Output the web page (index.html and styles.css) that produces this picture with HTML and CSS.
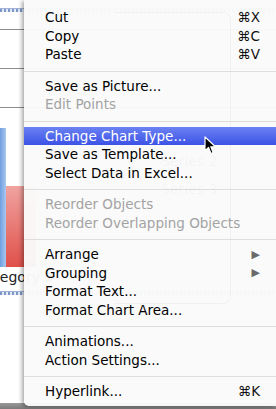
FILE: index.html
```html
<!DOCTYPE html>
<html lang="en">
<head>
  <meta charset="UTF-8">
  <title>Chart Context Menu</title>
  <link rel="stylesheet" href="styles.css">
</head>
<body>
  <div class="stage">
    <div class="chart">
      <div class="sel-line top"></div>
      <div class="grid g1"></div>
      <div class="grid g2"></div>
      <div class="grid g3"></div>
      <div class="bar blue"></div>
      <div class="bar red"></div>
      <div class="cat">Category 1</div>
      <div class="sel-line bottom"></div>
      <div class="window-bottom"></div>
    </div>

    <div class="menu">
      <div class="ghost">
        <div class="legend"></div>
        <span class="ghost-text s2">Series 2</span>
        <span class="ghost-text s3">Series 3</span>
      </div>
      <div class="item">Cut<span class="key">⌘X</span></div>
      <div class="item">Copy<span class="key">⌘C</span></div>
      <div class="item">Paste<span class="key">⌘V</span></div>
      <div class="sep"></div>
      <div class="item">Save as Picture...</div>
      <div class="item off">Edit Points</div>
      <div class="sep"></div>
      <div class="item active">Change Chart Type...</div>
      <div class="item">Save as Template...</div>
      <div class="item">Select Data in Excel...</div>
      <div class="sep"></div>
      <div class="item off">Reorder Objects</div>
      <div class="item off">Reorder Overlapping Objects</div>
      <div class="sep"></div>
      <div class="item">Arrange<span class="arrow">▶</span></div>
      <div class="item">Grouping<span class="arrow">▶</span></div>
      <div class="item">Format Text...</div>
      <div class="item">Format Chart Area...</div>
      <div class="sep"></div>
      <div class="item">Animations...</div>
      <div class="item">Action Settings...</div>
      <div class="sep"></div>
      <div class="item">Hyperlink...<span class="key">⌘K</span></div>
    </div>

    <svg class="cursor" width="14" height="20" viewBox="0 0 14 20">
      <path d="M1 1 L1 15 L4.5 11.5 L7 17.5 L9.2 16.6 L6.8 10.8 L11.5 10.8 Z" fill="#000" stroke="#fff" stroke-width="1.2" stroke-linejoin="round"/>
    </svg>
  </div>
</body>
</html>
```

FILE: styles.css
```css
body {
  margin: 0;
  padding: 0;
  background-color: #fff;
  font-family: "DejaVu Sans", "Liberation Sans", sans-serif;
}

.stage {
  position: relative;
  width: 276px;
  height: 409px;
  overflow: hidden;
}

/* chart behind the menu */
.chart {
  position: absolute;
  inset: 0;
  background-color: #fff;
}

.sel-line {
  position: absolute;
  left: 0;
  width: 100%;
  height: 3px;
  background: repeating-linear-gradient(90deg, #7c96c8 0 2px, #e6ecf6 2px 4px);
  border-top: 1px solid #9fb2d8;
}

.sel-line.top {
  top: 8px;
}

.sel-line.bottom {
  top: 291px;
}

.grid {
  position: absolute;
  left: 0;
  width: 100%;
  height: 1px;
  background-color: #8c8c8c;
}

.g1 { top: 29px; }
.g2 { top: 68px; }
.g3 { top: 107px; }

.bar {
  position: absolute;
  bottom: 142px;
}

.bar.blue {
  left: 0;
  width: 6px;
  top: 128px;
  background: linear-gradient(90deg, #6f9fe0, #a9c7ef);
}

.bar.red {
  left: 6px;
  width: 30px;
  top: 186px;
  background: linear-gradient(180deg, #f0a3a0, #e0504a);
}

.cat {
  position: absolute;
  left: -24px;
  top: 269px;
  font-size: 14px;
  color: #222;
}

.window-bottom {
  position: absolute;
  left: 0;
  right: 0;
  bottom: 0;
  height: 6px;
  background: linear-gradient(180deg, #9a9a9a, #7a7a7a);
}

/* context menu */
.menu {
  position: absolute;
  left: 24px;
  top: 0;
  right: 0;
  padding: 8px 0 5.5px;
  background-color: rgba(250, 250, 250, 0.97);
  border-radius: 0 0 0 5px;
  box-shadow: -2px 1px 4px rgba(0, 0, 0, 0.35);
  font-size: 13.5px;
  color: #000;
}

.ghost {
  position: absolute;
  inset: 0;
  pointer-events: none;
}

.legend {
  position: absolute;
  left: 90px;
  top: 12px;
  width: 116px;
  height: 290px;
  border: 1px solid rgba(0, 0, 0, 0.035);
  border-left: none;
  border-radius: 0 8px 8px 0;
}

.ghost-text {
  position: absolute;
  left: 137px;
  font-size: 14px;
  color: rgba(0, 0, 0, 0.04);
}

.s2 { top: 153px; }
.s3 { top: 181px; }

.item {
  position: relative;
  display: flex;
  align-items: center;
  height: 18.5px;
  padding: 0 16px 0 21px;
  white-space: nowrap;
}

.item.off {
  color: #a3a3a3;
}

.item.active {
  color: #fff;
  background: linear-gradient(180deg, #6b82f3, #3c52e6);
}

.key {
  margin-left: auto;
  color: #111;
}

.arrow {
  margin-left: auto;
  font-size: 11px;
  color: #6a6a6a;
}

.sep {
  height: 1px;
  margin: 7px 0 5px;
  background-color: #dedede;
}

.cursor {
  position: absolute;
  left: 204px;
  top: 136px;
}
```
